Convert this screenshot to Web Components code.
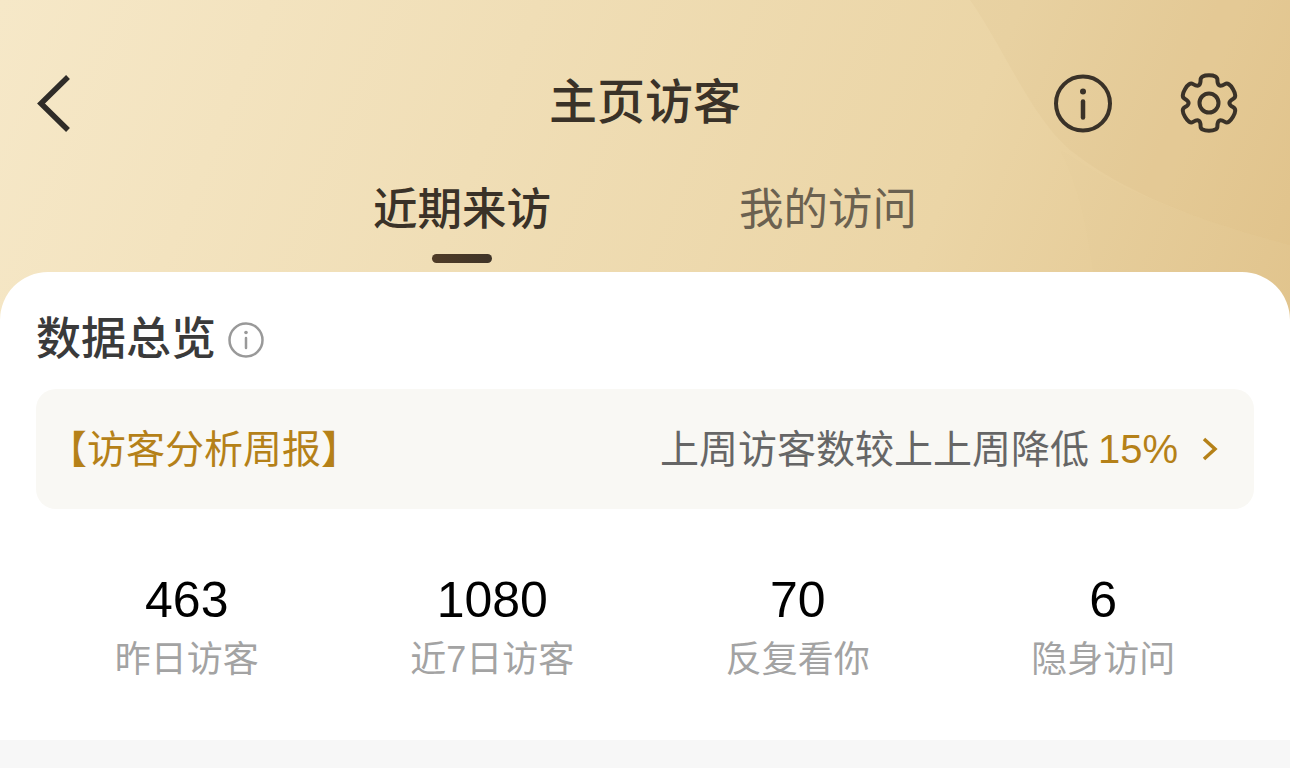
<!DOCTYPE html>
<html lang="zh">
<head>
<meta charset="utf-8">
<title>主页访客</title>
<style>
  html, body { margin: 0; height: 100%; overflow: hidden; background: #f7f7f7; }
</style>
</head>
<body>
<visitor-page></visitor-page>
<script>
const FONT = `"Liberation Sans", "Noto Sans CJK SC", sans-serif`;

function gearPath() {
  // six flat teeth; the polygon corners act as curve controls so the outline stays wavy
  const pts = [];
  for (let i = 0; i < 6; i++) {
    const a = -90 + i * 60;
    [[-24, 20.5], [-17, 29], [17, 29], [24, 20.5]].forEach(([off, r]) => {
      const t = (a + off) * Math.PI / 180;
      pts.push([30 + r * Math.cos(t), 30 + r * Math.sin(t)]);
    });
  }
  const mid = (p, q) => [(p[0] + q[0]) / 2, (p[1] + q[1]) / 2];
  const f = (p) => `${p[0].toFixed(2)} ${p[1].toFixed(2)}`;
  let d = "M" + f(mid(pts[pts.length - 1], pts[0]));
  pts.forEach((p, i) => {
    d += `Q${f(p)} ${f(mid(p, pts[(i + 1) % pts.length]))}`;
  });
  return d + "Z";
}

class NavBar extends HTMLElement {
  constructor() {
    super();
    this.attachShadow({ mode: "open" }).innerHTML = `
<style>
  :host { display: flex; align-items: center; justify-content: space-between; height: 60px; padding: 0 51px 0 36px; position: relative; color: #3a3228; }
  .title { position: absolute; left: 0; right: 0; text-align: center; font-size: 48px; font-weight: 500; line-height: 60px; pointer-events: none; }
  .actions { display: flex; align-items: center; gap: 66px; }
  svg { display: block; fill: none; stroke: #3a3228; }
</style>
<svg width="36" height="60" viewBox="0 0 36 60"><path d="M32 4 L5 30.500 L32 57" stroke-width="5.500" stroke="#2f2c28"/></svg>
<div class="title"><slot></slot></div>
<div class="actions">
  <svg width="60" height="60" viewBox="0 0 60 60" stroke-width="4"><circle cx="30" cy="30.500" r="27"/><path d="M30 28.500V44.500" stroke-linecap="round" stroke-width="4.500"/><circle cx="30" cy="18.500" r="3" fill="#3a3228" stroke="none"/></svg>
  <svg width="60" height="60" viewBox="0 0 60 60" stroke-width="4" stroke-linejoin="round"><path d="${gearPath()}"/><circle cx="30" cy="30" r="9.500"/></svg>
</div>`;
  }
}

class TabBar extends HTMLElement {
  constructor() {
    super();
    this.attachShadow({ mode: "open" }).innerHTML = `
<style>
  :host { display: flex; justify-content: center; gap: 188px; }
  ::slotted(tab-item) { flex: none; }
</style>
<slot></slot>`;
  }
}

class TabItem extends HTMLElement {
  constructor() {
    super();
    this.attachShadow({ mode: "open" }).innerHTML = `
<style>
  :host { display: flex; flex-direction: column; align-items: center; font-size: 44.500px; line-height: 64px; color: #6b6150; }
  :host([active]) { color: #3a3228; font-weight: 500; }
  i { display: none; width: 60px; height: 9px; border-radius: 5px; margin-top: 12px; background: linear-gradient(90deg, #4f3b26, #3f3428); }
  :host([active]) i { display: block; }
</style>
<span><slot></slot></span><i></i>`;
  }
}

class InfoCard extends HTMLElement {
  constructor() {
    super();
    this.attachShadow({ mode: "open" }).innerHTML = `
<style>
  :host { display: block; height: 468px; box-sizing: border-box; padding: 29px 36px 0; background: #fff; border-radius: 48px 48px 0 0; }
  .head { display: flex; align-items: center; gap: 12px; height: 68px; font-size: 45px; font-weight: 500; color: #3a3a3a; }
  svg { display: block; fill: none; stroke: #999; }
  .head svg { margin-top: 10px; }
  ::slotted(report-banner) { margin-top: 20px; }
  ::slotted(stat-row) { margin-top: 63px; }
</style>
<div class="head"><span>数据总览</span>
  <svg width="36" height="36" viewBox="0 0 36 36" stroke-width="2.500"><circle cx="18" cy="18" r="16.500"/><path d="M18 16V26" stroke-linecap="round"/><circle cx="18" cy="10.500" r="1.800" fill="#999" stroke="none"/></svg>
</div>
<slot></slot>`;
  }
}

class ReportBanner extends HTMLElement {
  constructor() {
    super();
    this.attachShadow({ mode: "open" }).innerHTML = `
<style>
  :host { display: flex; align-items: center; justify-content: space-between; height: 120px; box-sizing: border-box; padding: 0 36px 6px 12px; background: #f9f8f4; border-radius: 20px; font-size: 39px; color: #666; }
  .tag { color: #b58118; }
  .right { display: flex; align-items: center; }
  b { font-weight: 400; font-size: 40px; color: #b58118; margin: 6px 0 0 9px; }
  svg { display: block; margin: 6px 0 0 24px; fill: none; stroke: #b58118; }
</style>
<span class="tag"><slot name="tag"></slot></span>
<div class="right"><span><slot></slot></span><b><slot name="value"></slot></b>
  <svg width="16" height="26" viewBox="0 0 16 26" stroke-width="3.500"><path d="M2 3 L13 13 L2 23"/></svg>
</div>`;
  }
}

class StatRow extends HTMLElement {
  constructor() {
    super();
    this.attachShadow({ mode: "open" }).innerHTML = `
<style>
  :host { display: grid; grid-template-columns: repeat(4, 1fr); margin: 0 -2px; }
</style>
<slot></slot>`;
  }
}

class StatItem extends HTMLElement {
  constructor() {
    super();
    this.attachShadow({ mode: "open" }).innerHTML = `
<style>
  :host { display: flex; flex-direction: column; align-items: center; }
  .num { font-size: 50px; line-height: 56px; color: #000; }
  .label { font-size: 36px; line-height: 60px; margin-top: 2px; color: #a3a3a3; }
</style>
<div class="num">${this.getAttribute("value")}</div>
<div class="label"><slot></slot></div>`;
  }
}

class VisitorPage extends HTMLElement {
  constructor() {
    super();
    this.attachShadow({ mode: "open" }).innerHTML = `
<style>
  :host { display: block; height: 768px; background: #f7f7f7; font-family: ${FONT}; }
  header { height: 320px; box-sizing: border-box; padding-top: 73px; margin-bottom: -48px; position: relative; overflow: hidden;
    background: linear-gradient(112deg, #f6e8c8 0%, #f0deb6 38%, #ebd5a6 72%, #e2c58e 100%); }
  .waves { position: absolute; left: 0; top: 0; }
  nav-bar, tab-bar { position: relative; }
  tab-bar { margin-top: 45px; }
  info-card { position: relative; }
</style>
<header>
  <svg class="waves" width="1290" height="320" viewBox="0 0 1290 320">
    <path d="M970 0C1005 50 1030 115 1070 150C1130 198 1215 225 1290 245V0Z" fill="#b98a35" fill-opacity=".04"/>
    <path d="M1060 150C1085 200 1090 250 1100 320H1290V245C1215 225 1130 198 1070 155Z" fill="#b98a35" fill-opacity=".012"/>
  </svg>
  <nav-bar>主页访客</nav-bar>
  <tab-bar>
    <tab-item active>近期来访</tab-item>
    <tab-item>我的访问</tab-item>
  </tab-bar>
</header>
<info-card>
  <report-banner>
    <span slot="tag">【访客分析周报】</span>
    上周访客数较上上周降低
    <span slot="value">15%</span>
  </report-banner>
  <stat-row>
    <stat-item value="463">昨日访客</stat-item>
    <stat-item value="1080">近7日访客</stat-item>
    <stat-item value="70">反复看你</stat-item>
    <stat-item value="6">隐身访问</stat-item>
  </stat-row>
</info-card>`;
  }
}

customElements.define("nav-bar", NavBar);
customElements.define("tab-item", TabItem);
customElements.define("tab-bar", TabBar);
customElements.define("report-banner", ReportBanner);
customElements.define("stat-item", StatItem);
customElements.define("stat-row", StatRow);
customElements.define("info-card", InfoCard);
customElements.define("visitor-page", VisitorPage);
</script>
</body>
</html>
